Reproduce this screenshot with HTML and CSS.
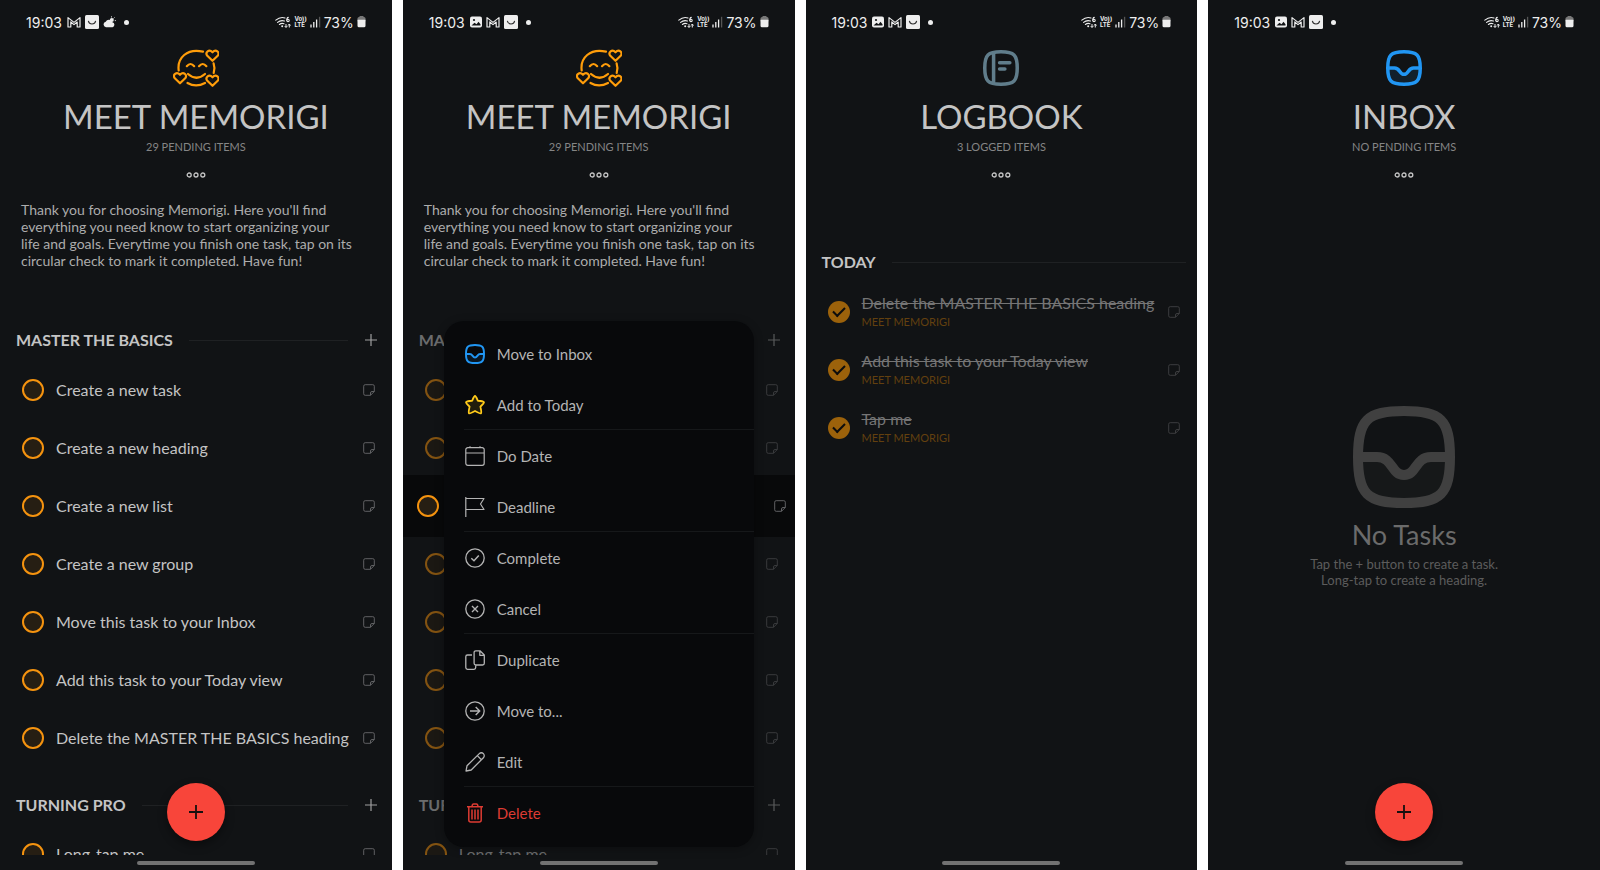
FILE: index.html
```html
<!DOCTYPE html>
<html lang="en">
<head>
<meta charset="utf-8">
<meta name="viewport" content="width=device-width, initial-scale=1">
<title>Memorigi</title>
<link rel="stylesheet" href="styles.css">
</head>
<body>
<svg class="sprite" aria-hidden="true">
  <symbol id="gmail" viewBox="0 0 14 12"><path d="M1 11V1.6L7 6.4 13 1.6V11H10.2V6L7 8.6 3.8 6V11Z" fill="none" stroke="currentColor" stroke-width="1.2" stroke-linejoin="round"/></symbol>
  <symbol id="smile" viewBox="0 0 14 14"><rect width="14" height="14" rx="1.5" fill="currentColor"/><path d="M3.4 6.2C4.2 10 9.8 10 10.6 6.2" fill="none" stroke="#333" stroke-width="1.1" stroke-linecap="round"/></symbol>
  <symbol id="cloud" viewBox="0 0 13 12"><path d="M3 11.2a2.8 2.8 0 0 1-.3-5.5A3.6 3.6 0 0 1 9.4 6.200 2.600 2.600 0 0 1 9.600 11.200Z" fill="currentColor"/><circle cx="8.800" cy="4" r="2" fill="currentColor"/><path d="M8.500.4v1M11.500 1.500l-.8.8M12.800 4.600h-1" stroke="currentColor" stroke-width="1"/></symbol>
  <symbol id="picture" viewBox="0 0 12 12"><rect y=".5" width="12" height="11" rx="2" fill="currentColor"/><circle cx="4" cy="4" r="1.100" fill="#111315"/><path d="M1.500 9.500 4.500 6.800 6.500 8.300 8.500 5.800 10.500 8.200V9.600Z" fill="#111315"/></symbol>
  <symbol id="wifi" viewBox="0 0 16 13"><g fill="none" stroke="currentColor" stroke-width="1.100" stroke-linecap="round"><path d="M.8 4.200Q5.500.2 10 2M2.600 6.400Q5.600 3.800 9.500 5M4.400 8.500Q6.500 6.800 9 7.700"/><path d="M13.300 1.400Q11.800 1.600 11.800 4.200" /><circle cx="13" cy="4.400" r="1.200"/></g><circle cx="7.200" cy="10.300" r="1" fill="currentColor"/><path d="M11 8v3.200M9.700 10 11 11.500 12.300 10M14.300 11.500V8.300M13.100 9.500 14.300 8 15.500 9.500" fill="none" stroke="currentColor"/></symbol>
  <symbol id="signal" viewBox="0 0 11 12"><path d="M1 8.500V11.500M3.800 6V11.500M6.600 3.500V11.500" stroke="currentColor" stroke-width="1.300"/><path d="M9.600.8V11.500" stroke="#555" stroke-width="1.300"/></symbol>
  <symbol id="battery" viewBox="0 0 9 12"><rect x="2.500" y="0" width="4" height="2" rx=".5" fill="#777"/><rect x=".5" y="1" width="8" height="5" rx="1.500" fill="#777"/><path d="M.5 3.800h8v6a1.500 1.500 0 0 1-1.500 1.500h-5A1.500 1.500 0 0 1 .5 9.800Z" fill="currentColor"/></symbol>
  <symbol id="face" viewBox="0 0 46 38"><g fill="none" stroke="currentColor" stroke-width="2.200" stroke-linecap="round" stroke-linejoin="round">
    <path d="M5.700 21.500C4 9 14-1 30 2.600"/><path d="M40.600 14.300Q42.300 19 40.700 24"/><path d="M14.500 34Q23 38.800 32 34"/>
    <path d="M13.800 17.200Q17.500 12.800 21.200 17.200M26 17.200Q29.700 12.800 33.400 17.200"/><path d="M15 25Q23.500 32.500 32 25"/>
    <path d="M39.500 11.800 34.300 6.800C31.800 3.400 36-.3 39.500 3.300 43-.3 47.200 3.400 44.700 6.800Z"/>
    <path d="M7 34.300 1.800 29.300C-.7 25.900 3.500 22.200 7 25.800 10.500 22.200 14.700 25.900 12.200 29.300Z"/>
    <path d="M39.500 36.800 34.300 31.800C31.800 28.400 36 24.700 39.500 28.300 43 24.700 47.200 28.400 44.700 31.800Z"/></g></symbol>
  <symbol id="inbox" viewBox="0 0 102 102"><path d="M5 51H24C40 51 38 69 51 69S62 51 78 51H97C97 88 88 97 51 97S5 88 5 51Z" fill="currentColor" fill-opacity=".1"/><path d="M51 5C88 5 97 14 97 51S88 97 51 97 5 88 5 51 14 5 51 5ZM5 51H24C40 51 38 69 51 69S62 51 78 51H97" fill="none" stroke="currentColor" stroke-width="10"/></symbol>
  <symbol id="logbook" viewBox="0 0 102 102"><path d="M51 5C88 5 97 14 97 51S88 97 51 97 5 88 5 51 14 5 51 5ZM30 9V93M47 36H76M47 54H62" fill="none" stroke="currentColor" stroke-width="10" stroke-linecap="round"/></symbol>
  <symbol id="dots" viewBox="0 0 20 6"><g fill="none" stroke="currentColor" stroke-width="1.300"><circle cx="3.200" cy="3" r="2"/><circle cx="10" cy="3" r="2"/><circle cx="16.800" cy="3" r="2"/></g></symbol>
  <symbol id="plus" viewBox="0 0 12 12"><path d="M6 0V12M0 6H12" stroke="currentColor" stroke-width="1.200"/></symbol>
  <symbol id="add" viewBox="0 0 14 14"><path d="M7 0V14M0 7H14" stroke="currentColor" stroke-width="1.800"/></symbol>
  <symbol id="note" viewBox="0 0 12 12"><path d="M7.500 11.300H2.200A1.500 1.500 0 0 1 .7 9.800V2.200A1.500 1.500 0 0 1 2.200.7H9.800A1.500 1.500 0 0 1 11.300 2.200V7.500ZM7.500 11.300V9A1.500 1.500 0 0 1 9 7.500H11.300" fill="none" stroke="currentColor" stroke-width="1" stroke-linejoin="round"/></symbol>
  <symbol id="star" viewBox="0 0 20 20"><path d="M10 1C10.900 1 11.100 1.600 12.800 5.700 17.500 6.200 18.700 6.300 19 7.200 19.300 8.200 18.700 8.600 15.400 11.600 16.500 16.500 16.800 17.600 16 18.300 15.200 18.900 14.600 18.600 10 16 5.400 18.600 4.800 18.900 4 18.300 3.200 17.600 3.500 16.500 4.600 11.600 1.300 8.600.7 8.200 1 7.200 1.300 6.300 2.500 6.200 7.200 5.700 8.900 1.600 9.100 1 10 1Z" fill="currentColor" fill-opacity=".1" stroke="currentColor" stroke-width="1.800" stroke-linejoin="round"/></symbol>
  <symbol id="calendar" viewBox="0 0 20 20"><path d="M3 1.700H17A2 2 0 0 1 19.200 3.700V17.300A2 2 0 0 1 17.200 19.300H2.800A2 2 0 0 1 .8 17.300V3.700A2 2 0 0 1 3 1.700ZM1 7H19M5 .3V2M15 .3V2" fill="none" stroke="currentColor" stroke-width="1.200"/></symbol>
  <symbol id="flag" viewBox="0 0 20 20"><path d="M.8 0V20M.8 1.500H19L15.500 7 19 12.500H.8" fill="none" stroke="currentColor" stroke-width="1.200" stroke-linejoin="round"/></symbol>
  <symbol id="complete" viewBox="0 0 20 20"><circle cx="10" cy="10" r="9.200" fill="none" stroke="currentColor" stroke-width="1.300"/><path d="M6.300 10.200 9 12.700 13.800 7.600" fill="none" stroke="currentColor" stroke-width="1.500"/></symbol>
  <symbol id="cancel" viewBox="0 0 20 20"><circle cx="10" cy="10" r="9.200" fill="none" stroke="currentColor" stroke-width="1.300"/><path d="M7 7 13 13M13 7 7 13" stroke="currentColor" stroke-width="1.400"/></symbol>
  <symbol id="duplicate" viewBox="0 0 20 20"><path d="M7 5H2.500A1.700 1.700 0 0 0 .8 6.700V17.600A1.700 1.700 0 0 0 2.500 19.300H9A1.700 1.700 0 0 0 10.700 17.600V15M10.800.8H15L19.300 5V13.300A1.700 1.700 0 0 1 17.600 15H10.800A1.700 1.700 0 0 1 9.100 13.300V2.500A1.700 1.700 0 0 1 10.800.8ZM14.800 1V5.300H19" fill="none" stroke="currentColor" stroke-width="1.300" stroke-linejoin="round"/></symbol>
  <symbol id="move" viewBox="0 0 20 20"><circle cx="10" cy="10" r="9.200" fill="none" stroke="currentColor" stroke-width="1.300"/><path d="M5 10H14.600M10.700 6 14.700 10 10.700 14" fill="none" stroke="currentColor" stroke-width="1.400"/></symbol>
  <symbol id="edit" viewBox="0 0 20 20"><path d="M1 19 2 13.800 14.300 1.600A2.400 2.400 0 0 1 18.400 5.700L6.200 18ZM12.300 3.600 16.400 7.700" fill="none" stroke="currentColor" stroke-width="1.300" stroke-linejoin="round"/></symbol>
  <symbol id="trash" viewBox="0 0 20 20"><path d="M2 3.800H18M7 3.500Q7.300 1 8.500 1H11.500Q12.700 1 13 3.500M3.800 4V17A2 2 0 0 0 5.800 19H14.200A2 2 0 0 0 16.200 17V4M7 6.500V16.500M10 6.500V16.500M13 6.500V16.500" fill="none" stroke="currentColor" stroke-width="1.500"/></symbol>
</svg>

<main class="gallery">

  <section class="phone">
    <div class="status">
      <span class="clock">19:03</span><svg class="s-gmail"><use href="#gmail"/></svg><svg class="s-smile"><use href="#smile"/></svg><svg class="s-cloud"><use href="#cloud"/></svg><span class="more"></span>
      <span class="system"><svg class="s-wifi"><use href="#wifi"/></svg><span class="volte">Vo))<br>LTE</span><svg class="s-signal"><use href="#signal"/></svg><span class="percent">73%</span><svg class="s-battery"><use href="#battery"/></svg></span>
    </div>
    <div class="content">
      <header class="head">
        <svg class="face"><use href="#face"/></svg>
        <h1>MEET MEMORIGI</h1>
        <p class="count">29 PENDING ITEMS</p>
        <button class="dots" aria-label="More options"><svg><use href="#dots"/></svg></button>
      </header>
      <p class="about">Thank you for choosing Memorigi. Here you'll find<br>everything you need know to start organizing your<br>life and goals. Everytime you finish one task, tap on its<br>circular check to mark it completed. Have fun!</p>
      <div class="heading"><h2>MASTER THE BASICS</h2><button aria-label="Add task"><svg><use href="#plus"/></svg></button></div>
      <ul class="tasks">
        <li><label><input type="checkbox"><span>Create a new task</span></label><svg class="note"><use href="#note"/></svg></li>
        <li><label><input type="checkbox"><span>Create a new heading</span></label><svg class="note"><use href="#note"/></svg></li>
        <li><label><input type="checkbox"><span>Create a new list</span></label><svg class="note"><use href="#note"/></svg></li>
        <li><label><input type="checkbox"><span>Create a new group</span></label><svg class="note"><use href="#note"/></svg></li>
        <li><label><input type="checkbox"><span>Move this task to your Inbox</span></label><svg class="note"><use href="#note"/></svg></li>
        <li><label><input type="checkbox"><span>Add this task to your Today view</span></label><svg class="note"><use href="#note"/></svg></li>
        <li><label><input type="checkbox"><span>Delete the MASTER THE BASICS heading</span></label><svg class="note"><use href="#note"/></svg></li>
      </ul>
      <div class="heading later"><h2>TURNING PRO</h2><button aria-label="Add task"><svg><use href="#plus"/></svg></button></div>
      <ul class="tasks tight">
        <li><label><input type="checkbox"><span>Long-tap me</span></label><svg class="note"><use href="#note"/></svg></li>
      </ul>
    </div>
    <button class="fab" aria-label="New task"><svg><use href="#add"/></svg></button>
    <div class="navbar"><span></span></div>
  </section>

  <section class="phone dimmed">
    <div class="status">
      <span class="clock">19:03</span><svg class="s-picture"><use href="#picture"/></svg><svg class="s-gmail"><use href="#gmail"/></svg><svg class="s-smile"><use href="#smile"/></svg><span class="more"></span>
      <span class="system"><svg class="s-wifi"><use href="#wifi"/></svg><span class="volte">Vo))<br>LTE</span><svg class="s-signal"><use href="#signal"/></svg><span class="percent">73%</span><svg class="s-battery"><use href="#battery"/></svg></span>
    </div>
    <div class="content">
      <header class="head">
        <svg class="face"><use href="#face"/></svg>
        <h1>MEET MEMORIGI</h1>
        <p class="count">29 PENDING ITEMS</p>
        <button class="dots" aria-label="More options"><svg><use href="#dots"/></svg></button>
      </header>
      <p class="about">Thank you for choosing Memorigi. Here you'll find<br>everything you need know to start organizing your<br>life and goals. Everytime you finish one task, tap on its<br>circular check to mark it completed. Have fun!</p>
      <div class="heading"><h2>MASTER THE BASICS</h2><button aria-label="Add task"><svg><use href="#plus"/></svg></button></div>
      <ul class="tasks">
        <li><label><input type="checkbox"><span>Create a new task</span></label><svg class="note"><use href="#note"/></svg></li>
        <li><label><input type="checkbox"><span>Create a new heading</span></label><svg class="note"><use href="#note"/></svg></li>
        <li class="selected"><label><input type="checkbox" aria-label="Create a new list"></label><svg class="note"><use href="#note"/></svg></li>
        <li><label><input type="checkbox"><span>Create a new group</span></label><svg class="note"><use href="#note"/></svg></li>
        <li><label><input type="checkbox"><span>Move this task to your Inbox</span></label><svg class="note"><use href="#note"/></svg></li>
        <li><label><input type="checkbox"><span>Add this task to your Today view</span></label><svg class="note"><use href="#note"/></svg></li>
        <li><label><input type="checkbox"><span>Delete the MASTER THE BASICS heading</span></label><svg class="note"><use href="#note"/></svg></li>
      </ul>
      <div class="heading later"><h2>TURNING PRO</h2><button aria-label="Add task"><svg><use href="#plus"/></svg></button></div>
      <ul class="tasks tight">
        <li><label><input type="checkbox"><span>Long-tap me</span></label><svg class="note"><use href="#note"/></svg></li>
      </ul>
    </div>
    <nav class="menu" aria-label="Task actions">
      <div class="group">
        <button><svg class="blue"><use href="#inbox"/></svg>Move to Inbox</button>
        <button><svg class="yellow"><use href="#star"/></svg>Add to Today</button>
      </div>
      <div class="group">
        <button><svg><use href="#calendar"/></svg>Do Date</button>
        <button><svg><use href="#flag"/></svg>Deadline</button>
      </div>
      <div class="group">
        <button><svg><use href="#complete"/></svg>Complete</button>
        <button><svg><use href="#cancel"/></svg>Cancel</button>
      </div>
      <div class="group">
        <button><svg><use href="#duplicate"/></svg>Duplicate</button>
        <button><svg><use href="#move"/></svg>Move to...</button>
        <button><svg><use href="#edit"/></svg>Edit</button>
      </div>
      <div class="group">
        <button class="danger"><svg><use href="#trash"/></svg>Delete</button>
      </div>
    </nav>
    <div class="navbar"><span></span></div>
  </section>

  <section class="phone">
    <div class="status">
      <span class="clock">19:03</span><svg class="s-picture"><use href="#picture"/></svg><svg class="s-gmail"><use href="#gmail"/></svg><svg class="s-smile"><use href="#smile"/></svg><span class="more"></span>
      <span class="system"><svg class="s-wifi"><use href="#wifi"/></svg><span class="volte">Vo))<br>LTE</span><svg class="s-signal"><use href="#signal"/></svg><span class="percent">73%</span><svg class="s-battery"><use href="#battery"/></svg></span>
    </div>
    <div class="content">
      <header class="head">
        <svg class="slate"><use href="#logbook"/></svg>
        <h1>LOGBOOK</h1>
        <p class="count">3 LOGGED ITEMS</p>
        <button class="dots" aria-label="More options"><svg><use href="#dots"/></svg></button>
      </header>
      <div class="heading day"><h2>TODAY</h2></div>
      <ul class="tasks logged">
        <li><label><input type="checkbox" checked><span><s>Delete the MASTER THE BASICS heading</s><small>MEET MEMORIGI</small></span></label><svg class="note"><use href="#note"/></svg></li>
        <li><label><input type="checkbox" checked><span><s>Add this task to your Today view</s><small>MEET MEMORIGI</small></span></label><svg class="note"><use href="#note"/></svg></li>
        <li><label><input type="checkbox" checked><span><s>Tap me</s><small>MEET MEMORIGI</small></span></label><svg class="note"><use href="#note"/></svg></li>
      </ul>
    </div>
    <div class="navbar"><span></span></div>
  </section>

  <section class="phone">
    <div class="status">
      <span class="clock">19:03</span><svg class="s-picture"><use href="#picture"/></svg><svg class="s-gmail"><use href="#gmail"/></svg><svg class="s-smile"><use href="#smile"/></svg><span class="more"></span>
      <span class="system"><svg class="s-wifi"><use href="#wifi"/></svg><span class="volte">Vo))<br>LTE</span><svg class="s-signal"><use href="#signal"/></svg><span class="percent">73%</span><svg class="s-battery"><use href="#battery"/></svg></span>
    </div>
    <div class="content">
      <header class="head">
        <svg class="blue"><use href="#inbox"/></svg>
        <h1>INBOX</h1>
        <p class="count">NO PENDING ITEMS</p>
        <button class="dots" aria-label="More options"><svg><use href="#dots"/></svg></button>
      </header>
      <div class="empty">
        <svg><use href="#inbox"/></svg>
        <h2>No Tasks</h2>
        <p>Tap the + button to create a task.<br>Long-tap to create a heading.</p>
      </div>
    </div>
    <button class="fab" aria-label="New task"><svg><use href="#add"/></svg></button>
    <div class="navbar"><span></span></div>
  </section>

</main>
</body>
</html>
```
FILE: styles.css
```css
* { box-sizing: border-box; }
body { margin: 0; background: #fff; font-family: Lato, "Open Sans", sans-serif; color: #c4c4c4; }
h1, h2, p, ul { margin: 0; padding: 0; font-weight: 400; }
ul { list-style: none; }
button { border: 0; padding: 0; background: none; color: inherit; font: inherit; cursor: pointer; }
svg { flex: none; display: block; }
.sprite { position: absolute; width: 0; height: 0; }

.gallery { display: grid; grid-template-columns: repeat(4, minmax(0, 1fr)); gap: 11px; height: 100vh; }
.phone { position: relative; display: flex; flex-direction: column; min-height: 0; background: #111315; overflow: hidden; }

/* status bar */
.status { flex: none; display: flex; align-items: center; gap: 4px; height: 44px; padding: 0 26px; color: #eee; font-family: Inter, Roboto, sans-serif; font-size: 14px; }
.clock { margin-right: 1px; }
.s-gmail { width: 14px; height: 12px; }
.s-smile { width: 14px; height: 14px; }
.s-cloud { width: 13px; height: 12px; }
.s-picture { width: 12px; height: 12px; }
.more { width: 5px; height: 5px; margin-left: 4px; border-radius: 50%; background: currentColor; }
.system { display: flex; align-items: center; gap: 3px; margin-left: auto; }
.s-wifi { width: 16px; height: 13px; }
.volte { font-size: 6px; line-height: 6px; font-weight: 700; }
.s-signal { width: 11px; height: 12px; }
.s-battery { width: 9px; height: 12px; }

/* screen header */
.content { flex: 1; min-height: 0; overflow: hidden; display: flex; flex-direction: column; }
.content > * { flex: none; }
.head { display: flex; flex-direction: column; align-items: center; padding-top: 5px; }
.head > svg { width: 38px; height: 38px; padding: 1px; }
.head > .face { width: 46px; padding: 0; color: #ff9d0a; }
.blue { color: #2196f3; }
.slate { color: #607d8b; }
.yellow { color: #ffca1a; }
h1 { margin-top: 9px; font-size: 33px; line-height: 40px; }
.count { margin-top: 3px; font-size: 11px; line-height: 16px; color: #858585; }
.dots { display: flex; align-items: center; height: 20px; margin-top: 10px; }
.dots svg { width: 20px; height: 6px; }
.about { margin-top: 16px; padding: 0 21px; font-size: 14px; line-height: 17px; color: #acacac; }

/* headings and tasks */
.heading { display: flex; align-items: center; height: 40px; margin-top: 51px; padding: 0 15px 0 16px; }
.heading h2 { font-size: 16px; line-height: 20px; font-weight: 700; }
.heading::after { content: ""; order: 1; flex: 1; height: 1px; margin: 0 17px 0 16px; background: #1f2123; }
.heading button { order: 2; color: #a0a0a0; }
.heading button svg { width: 12px; height: 12px; }
.later { margin-top: 17px; }
.day { margin-top: 57px; }
.day::after { margin-right: -4px; }
.tasks { padding: 1px 0; }
.tight { padding-top: 0; }
.tasks li { display: flex; align-items: center; height: 58px; padding: 0 17px 0 22px; }
.tasks label { flex: 1; display: flex; align-items: center; gap: 12px; font-size: 16px; line-height: 20px; white-space: nowrap; }
.tasks input { flex: none; appearance: none; width: 22px; height: 22px; margin: 0; border: 2px solid #f5930f; border-radius: 50%; background: #261e13; }
.note { width: 12px; height: 12px; color: #606163; }

.logged input { display: grid; place-items: center; border: 0; background: #9c620b; }
.logged input::before { content: ""; width: 10px; height: 5px; margin-top: -3px; border: solid #0d0d0d; border-width: 0 0 2px 2px; transform: rotate(-45deg); }
.logged s { display: block; color: #757575; }
.logged small { display: block; font-size: 11px; line-height: 18px; color: #63400f; }
.logged .note { color: #3c3d3f; }

/* long-press menu */
.dimmed .heading > *, .dimmed li:not(.selected) > * { opacity: .5; }
.dimmed .selected { height: 62px; margin: -2px 0; padding: 0 9px 0 14px; background: #08090a; }
.menu { position: absolute; top: 321px; left: 41px; right: 41px; padding: 7px 0 9px 20px; border-radius: 20px; background: #08090b; box-shadow: 0 2px 10px rgba(0, 0, 0, .3); }
.group + .group { box-shadow: 0 -1px #16181a; }
.menu button { display: flex; align-items: center; gap: 12px; width: 100%; height: 51px; padding-left: 1px; font-size: 15px; color: #b4b4b4; }
.menu svg { width: 20px; height: 20px; }
.menu .danger { color: #dd3b33; }

/* empty state */
.content > .empty { flex: 1; display: flex; flex-direction: column; align-items: center; justify-content: center; padding-bottom: 46px; color: #6b6b6b; text-align: center; }
.empty svg { width: 102px; height: 102px; color: #404040; }
.empty h2 { margin-top: 11px; font-size: 27px; line-height: 32px; }
.empty p { margin-top: 5px; font-size: 13px; line-height: 16px; color: #5c5c5c; }

.fab { position: absolute; bottom: 29px; left: 50%; display: grid; place-items: center; width: 58px; height: 58px; margin-left: -29px; border-radius: 50%; background: #f8453a; color: #16100f; box-shadow: 0 4px 10px rgba(0, 0, 0, .4); }
.fab svg { width: 14px; height: 14px; }
.navbar { flex: none; display: flex; justify-content: center; height: 15px; padding-top: 6px; }
.navbar span { width: 118px; height: 4px; border-radius: 2px; background: #727272; }
```
